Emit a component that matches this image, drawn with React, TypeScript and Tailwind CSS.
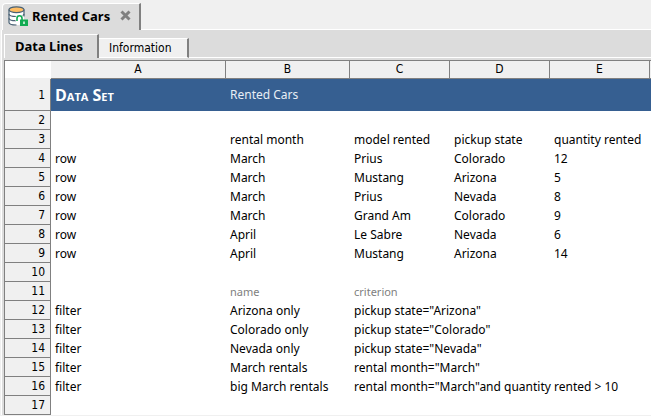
import { useState } from 'react';

const columns = ['A', 'B', 'C', 'D', 'E'];

const rows: string[][] = [
  ['Data Set', 'Rented Cars'],
  [],
  ['', 'rental month', 'model rented', 'pickup state', 'quantity rented'],
  ['row', 'March', 'Prius', 'Colorado', '12'],
  ['row', 'March', 'Mustang', 'Arizona', '5'],
  ['row', 'March', 'Prius', 'Nevada', '8'],
  ['row', 'March', 'Grand Am', 'Colorado', '9'],
  ['row', 'April', 'Le Sabre', 'Nevada', '6'],
  ['row', 'April', 'Mustang', 'Arizona', '14'],
  [],
  ['', 'name', 'criterion'],
  ['filter', 'Arizona only', 'pickup state="Arizona"'],
  ['filter', 'Colorado only', 'pickup state="Colorado"'],
  ['filter', 'Nevada only', 'pickup state="Nevada"'],
  ['filter', 'March rentals', 'rental month="March"'],
  ['filter', 'big March rentals', 'rental month="March"and quantity rented > 10'],
  [],
];

function DataSetIcon() {
  return (
    <svg width="20" height="20" viewBox="0 0 20 20" fill="none" className="-mt-[2px]">
      <path d="M1 3.500v13c0 1.500 3.200 2.500 7.500 2.500s7.500-1 7.500-2.500v-13" fill="#fff" />
      <path d="M1 3.500v13c0 1.500 3.200 2.500 7.500 2.500M16 3.500v7" stroke="#4a6275" strokeWidth="1.200" />
      <ellipse cx="8.500" cy="3.700" rx="7.500" ry="2.900" fill="#ffbd63" stroke="#4a6275" strokeWidth="1.200" />
      <path d="M1 8c0 1.500 3.200 2.500 7.500 2.500s7.500-1 7.500-2.500M1 12.200c0 1.500 3.200 2.500 7 2.500" stroke="#4a6275" strokeWidth="1.200" />
      <path d="M9 15v-2.800a2.500 2.500 0 0 1 5 0v2" stroke="#fff" strokeWidth="3" />
      <path d="M9 15v-2.800a2.500 2.500 0 0 1 5 0v2" stroke="#12ab52" strokeWidth="1.600" />
      <rect x="12" y="13.500" width="8" height="6.500" fill="#12ab52" />
      <path d="M16 15.500v2.500" stroke="#fff" strokeWidth="1.400" />
    </svg>
  );
}

function cellStyle(row: number, col: number) {
  if (row === 0) {
    return col === 0
      ? 'text-white text-[16px] font-bold [font-variant:small-caps] font-["Open_Sans",sans-serif]'
      : 'text-[#e8eef5]';
  }
  if (row === 10) return 'text-[#808080] text-[11px]';
  return 'text-black';
}

export default function App() {
  const [tab, setTab] = useState('Data Lines');

  return (
    <div className="min-h-screen bg-[#f0f0f0] pt-[3px] text-[12px] text-black font-['Noto_Sans',sans-serif]">
      <div className="flex pl-[2px]">
        <div className="flex h-[27px] items-center rounded-tl border-t border-l border-t-white border-l-white border-r-2 border-r-[#808080] bg-[#dcdcdc] pr-2 pl-[5px]">
          <DataSetIcon />
          <h1 className="ml-1 text-[13px] font-bold whitespace-nowrap">Rented Cars</h1>
          <button aria-label="Close" className="-mt-1 ml-[10px]">
            <svg width="11" height="11" viewBox="0 0 11 11" fill="none">
              <path d="M1.500 1.500l8 8M9.500 1.500l-8 8" stroke="#808080" strokeWidth="3" />
            </svg>
          </button>
        </div>
        <div className="flex-1 border-b border-white" />
      </div>

      <div className="ml-px border-l border-white bg-[#dcdcdc] pl-[2px]">
        <div className="flex items-end pt-1" role="tablist">
          {['Data Lines', 'Information'].map((name) => (
            <button
              key={name}
              role="tab"
              aria-selected={tab === name}
              onClick={() => setTab(name)}
              className={
                tab === name
                  ? 'h-6 border-t border-l border-white border-r-2 border-r-[#808080] pr-[14px] pb-[2px] pl-[10px] text-[13px] leading-[20px] font-bold'
                  : 'h-5 border-t border-b border-white border-r-2 border-r-[#808080] bg-[#f0f0f0] pr-[16px] pl-[10px] text-[12px] leading-[18px] font-["DejaVu_Sans_Condensed","DejaVu_Sans",sans-serif]'
              }
            >
              {name}
            </button>
          ))}
          <div className="flex-1 border-b border-white" />
        </div>

        <div className="mt-[2px] overflow-hidden border-t border-l border-[#808080] bg-white">
          <table className="w-full min-w-[646px] table-fixed border-separate border-spacing-0">
            <colgroup>
              <col className="w-[46px]" />
              <col className="w-[175px]" />
              <col className="w-[124px]" />
              <col className="w-[100px]" />
              <col className="w-[100px]" />
              <col className="w-[100px]" />
              <col />
            </colgroup>
            <thead className="font-['DejaVu_Sans_Condensed','DejaVu_Sans',sans-serif]">
              <tr className="h-[18px] leading-[17px]">
                <td className="border-b border-[#f0f0f0]" />
                {columns.map((name) => (
                  <th key={name} className="border-r border-b border-[#808080] bg-[#f0f0f0] p-0 font-normal">
                    {name}
                  </th>
                ))}
                <th className="border-b border-[#808080] bg-[#f0f0f0] p-0" />
              </tr>
            </thead>
            <tbody>
              {rows.map((row, r) => (
                <tr key={r} className={r === 0 ? 'h-8 bg-[#365f91]' : 'h-[19px]'}>
                  <th className="border-r border-b border-[#808080] bg-[#f0f0f0] p-0 pr-[5px] text-right leading-[18px] font-normal font-['DejaVu_Sans_Condensed','DejaVu_Sans',sans-serif]">
                    {r + 1}
                  </th>
                  {columns.map((name, c) => (
                    <td key={name} className={`p-0 pl-1 leading-[18px] whitespace-nowrap ${cellStyle(r, c)}`}>
                      {row[c]}
                    </td>
                  ))}
                  <td className="p-0" />
                </tr>
              ))}
            </tbody>
          </table>
        </div>
      </div>
    </div>
  );
}
